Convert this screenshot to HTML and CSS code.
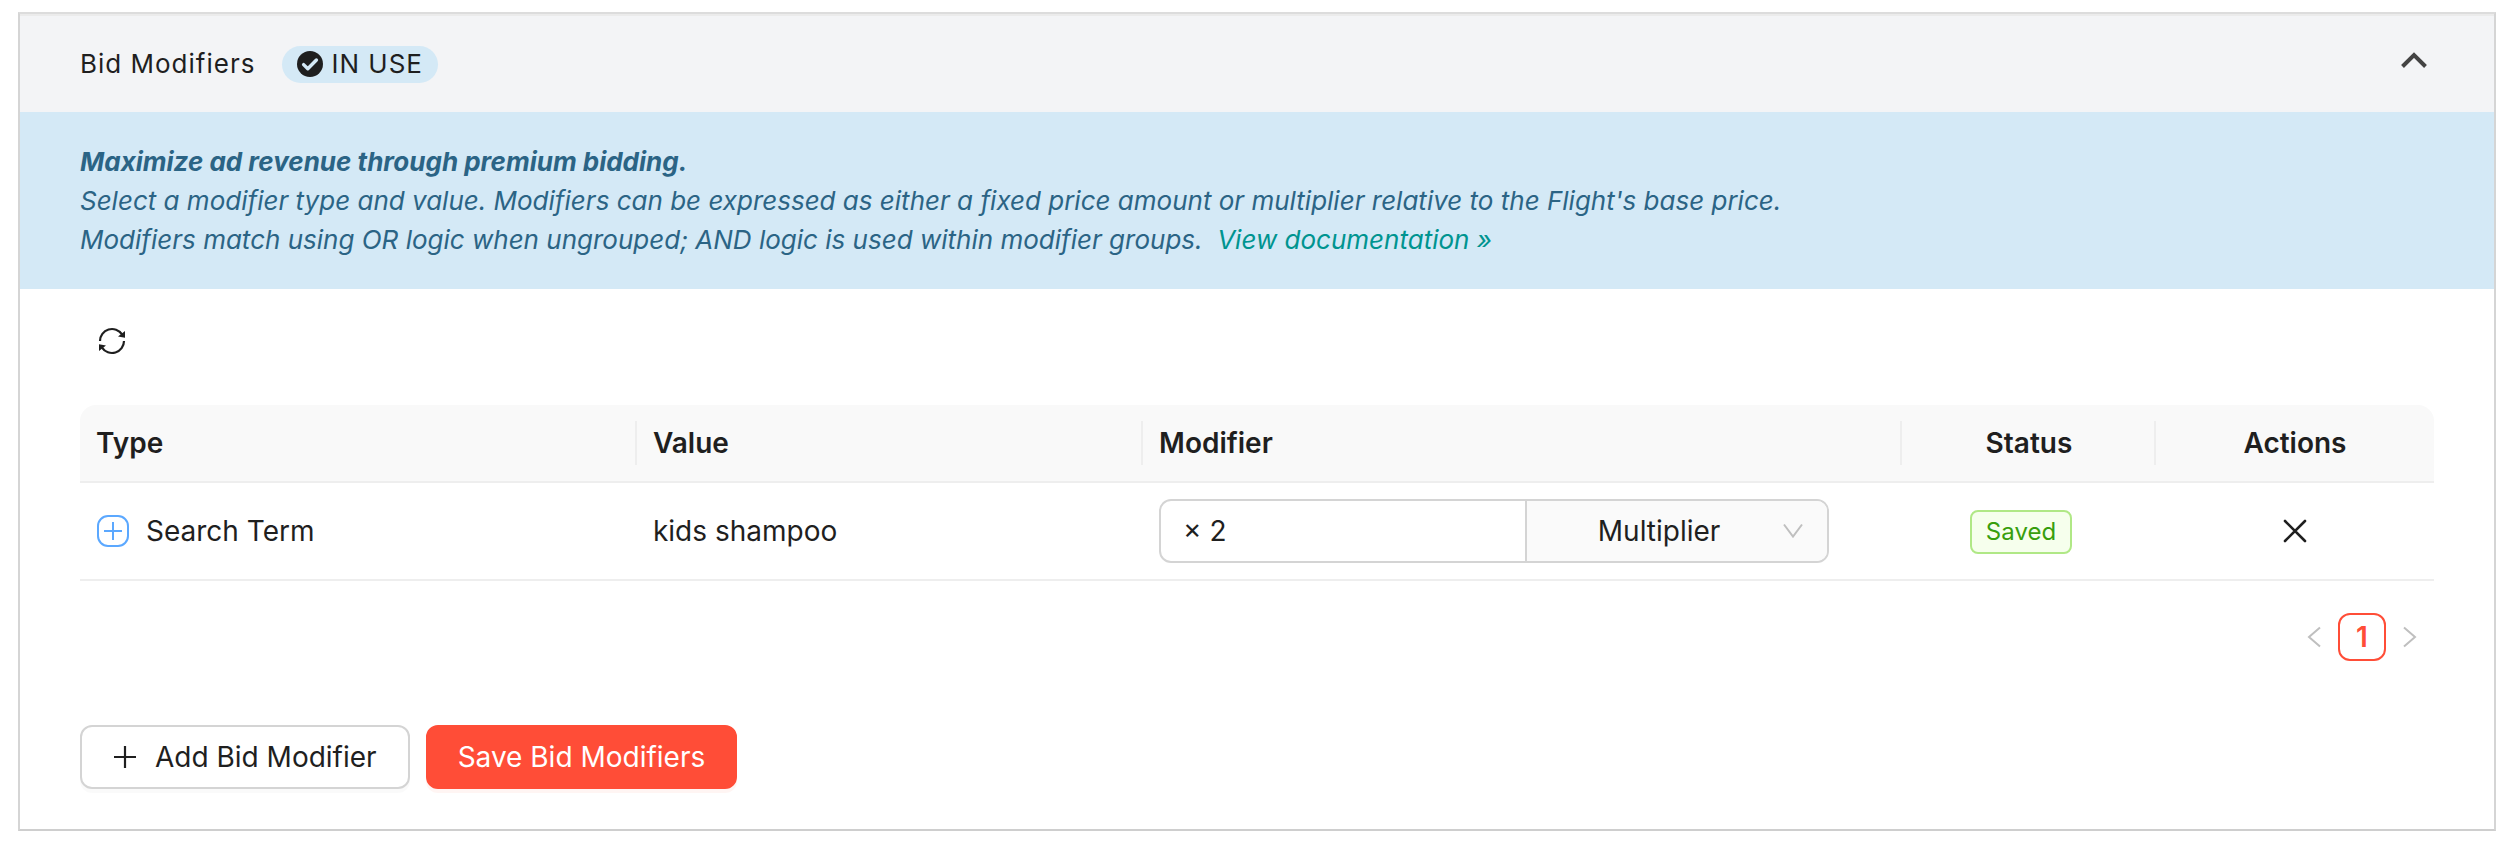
FILE: index.html
```
<!DOCTYPE html>
<html lang="en">
<head>
    <meta charset="UTF-8">
    <meta name="viewport" content="width=device-width, initial-scale=1.0">
    <title>Bid Modifiers</title>
    <link rel="stylesheet" href="styles.css">
</head>
<body>
    <section class="panel">
        <header class="panel-header">
            <h2>Bid Modifiers</h2>
            <span class="badge">
                <svg class="badge-icon" viewBox="0 0 26 26" aria-hidden="true">
                    <circle cx="13" cy="13" r="13" fill="#1f1f1f"/>
                    <path d="M6.6 13.6l4.2 4.2 8.6-8.8" fill="none" stroke="#d4e9f6" stroke-width="3.4" stroke-linecap="round" stroke-linejoin="round"/>
                </svg>
                IN USE
            </span>
            <button class="collapse" type="button" aria-label="Collapse">
                <svg width="28" height="18" viewBox="0 0 28 18">
                    <path d="M2.5 15.5L14 4l11.5 11.5" fill="none" stroke="#434343" stroke-width="4"/>
                </svg>
            </button>
        </header>

        <div class="banner">
            <strong>Maximize ad revenue through premium bidding.</strong><br>
            Select a modifier type and value. Modifiers can be expressed as either a fixed price amount or multiplier relative to the Flight's base price.<br>
            Modifiers match using OR logic when ungrouped; AND logic is used within modifier groups.&nbsp; <a href="#">View documentation »</a>
        </div>

        <div class="panel-body">
            <button class="refresh" type="button" aria-label="Refresh">
                <svg width="28" height="28" viewBox="0 0 28 28">
                    <path d="M2 14A12 12 0 0 1 24 7.4M26 14A12 12 0 0 1 4 20.6" fill="none" stroke="#1f1f1f" stroke-width="2.2"/>
                    <path d="M27 4v6.8l-7-1.4zM1 24v-6.8l7 1.4z" fill="#1f1f1f"/>
                </svg>
            </button>

            <table class="modifiers">
                <colgroup>
                    <col class="col-type">
                    <col class="col-value">
                    <col class="col-modifier">
                    <col class="col-status">
                    <col class="col-actions">
                </colgroup>
                <thead>
                    <tr>
                        <th>Type</th>
                        <th>Value</th>
                        <th>Modifier</th>
                        <th class="center">Status</th>
                        <th class="center">Actions</th>
                    </tr>
                </thead>
                <tbody>
                    <tr>
                        <td>
                            <div class="type">
                                <button class="expand" type="button" aria-label="Add to group">
                                    <svg width="34" height="32" viewBox="-1 0 34 32">
                                        <rect x="1" y="1" width="30" height="30" rx="10" fill="none" stroke="#5ba8ff" stroke-width="2"/>
                                        <path d="M16 7v18M7 16h18" stroke="#5ba8ff" stroke-width="2"/>
                                    </svg>
                                </button>
                                Search Term
                            </div>
                        </td>
                        <td>kids shampoo</td>
                        <td>
                            <div class="amount">
                                <input type="text" value="× 2" aria-label="Modifier amount">
                                <div class="select">
                                    <select aria-label="Modifier kind">
                                        <option>Multiplier</option>
                                        <option>Fixed</option>
                                    </select>
                                    <svg width="20" height="16" viewBox="0 0 20 16" aria-hidden="true">
                                        <path d="M1 1.5l9 12 9-12" fill="none" stroke="#bfbfbf" stroke-width="2"/>
                                    </svg>
                                </div>
                            </div>
                        </td>
                        <td class="center"><span class="tag">Saved</span></td>
                        <td class="center">
                            <button class="remove" type="button" aria-label="Remove">
                                <svg width="24" height="24" viewBox="0 0 24 24">
                                    <path d="M2 2l20 20M22 2L2 22" stroke="#1f1f1f" stroke-width="2.6" stroke-linecap="round"/>
                                </svg>
                            </button>
                        </td>
                    </tr>
                </tbody>
            </table>

            <nav class="pagination" aria-label="Pages">
                <button type="button" aria-label="Previous page" disabled>
                    <svg width="14" height="22" viewBox="0 0 14 22">
                        <path d="M13 1.5L2 11l11 9.5" fill="none" stroke="#bfbfbf" stroke-width="2"/>
                    </svg>
                </button>
                <button class="current" type="button">1</button>
                <button type="button" aria-label="Next page" disabled>
                    <svg width="14" height="22" viewBox="0 0 14 22">
                        <path d="M1 1.5L12 11 1 20.5" fill="none" stroke="#bfbfbf" stroke-width="2"/>
                    </svg>
                </button>
            </nav>

            <div class="footer">
                <button class="btn" type="button">
                    <svg width="24" height="24" viewBox="0 0 24 24" aria-hidden="true">
                        <path d="M12 1v22M1 12h22" stroke="#1f1f1f" stroke-width="2.2"/>
                    </svg>
                    Add Bid Modifier
                </button>
                <button class="btn btn-primary" type="button">Save Bid Modifiers</button>
            </div>
        </div>
    </section>
</body>
</html>
```
FILE: styles.css
```
* {
    box-sizing: border-box;
}
body {
    margin: 12px 12px 12px 18px;
    background: #fff;
    color: #1f1f1f;
    font-family: Inter, sans-serif;
    font-size: 28px;
    line-height: 44px;
}
button,
input,
select {
    margin: 0;
    padding: 0;
    border: 0;
    background: none;
    color: inherit;
    font: inherit;
}
button {
    cursor: pointer;
}
svg {
    display: block;
    flex: none;
}
.panel {
    border: 2px solid #d5d5d5;
    border-top-color: #dcdcdc;
    border-bottom-color: #cecece;
    box-shadow: 0 4px 12px rgba(0, 0, 0, 0.13);
}
.panel-header {
    display: flex;
    align-items: center;
    min-height: 98px;
    padding: 0 64px 0 60px;
    border-top: 2px solid #ebebeb;
    background: #f3f4f6;
    font-size: 26px;
    letter-spacing: 1px;
}
.panel-header h2 {
    margin: 0 27px 0 0;
    font-size: 26px;
    font-weight: 400;
}
.badge {
    display: flex;
    align-items: center;
    gap: 8px;
    height: 37px;
    padding: 0 15px;
    border-radius: 19px;
    background: #d4e9f6;
}
.badge-icon {
    width: 26px;
    height: 26px;
}
.collapse {
    margin-left: auto;
    padding: 4px 2px 12px;
}
.banner {
    padding: 30px 60px;
    background: #d4e9f6;
    color: #2b6485;
    font-size: 26px;
    font-style: oblique 10deg;
    line-height: 39px;
}
.banner strong {
    font-weight: 700;
}
.banner a {
    color: #009490;
    text-decoration: none;
}
.panel-body {
    padding: 20px 60px 40px;
}
.refresh {
    display: flex;
    align-items: center;
    justify-content: center;
    width: 64px;
    height: 64px;
    margin-bottom: 32px;
}
.modifiers {
    width: 100%;
    border-collapse: separate;
    border-spacing: 0;
    table-layout: fixed;
}
.col-type {
    width: 23.66%;
}
.col-value {
    width: 21.5%;
}
.col-modifier {
    width: 32.24%;
}
.col-status {
    width: 10.79%;
}
.col-actions {
    width: 11.81%;
}
.modifiers th,
.modifiers td {
    padding: 16px;
    border-bottom: 2px solid #eee;
    text-align: left;
}
.modifiers th {
    background: #f9f9f9 linear-gradient(#eee, #eee) no-repeat right center / 2px 44px;
    font-weight: 600;
}
.modifiers th:first-child {
    border-top-left-radius: 16px;
}
.modifiers th:last-child {
    border-top-right-radius: 16px;
    background-image: none;
}
.modifiers .center {
    text-align: center;
}
.type {
    display: flex;
    align-items: center;
    gap: 16px;
}
.amount {
    display: flex;
    max-width: 670px;
    height: 64px;
    border: 2px solid #d4d4d4;
    border-radius: 12px;
    overflow: hidden;
}
.amount input {
    flex: 1;
    min-width: 0;
    padding: 0 22px;
}
.select {
    position: relative;
    width: 302px;
    border-left: 2px solid #d4d4d4;
    background: #fafafa;
}
.select select {
    width: 100%;
    height: 100%;
    padding-right: 36px;
    appearance: none;
    text-align: center;
    text-align-last: center;
}
.select svg {
    position: absolute;
    top: 22px;
    right: 24px;
    pointer-events: none;
}
.tag {
    display: inline-block;
    margin-right: 16px;
    padding: 0 14px;
    border: 2px solid #b0e886;
    border-radius: 8px;
    background: #f6ffed;
    color: #389e0d;
    font-size: 24px;
    line-height: 40px;
    vertical-align: middle;
}
.remove {
    display: block;
    margin: 0 auto;
}
.pagination {
    display: flex;
    justify-content: flex-end;
    margin: 32px 0 64px;
}
.pagination button {
    display: flex;
    align-items: center;
    justify-content: center;
    width: 48px;
    height: 48px;
}
.pagination .current {
    border: 2px solid #ff4d37;
    border-radius: 12px;
    color: #ff4d37;
    font-weight: 600;
}
.footer {
    display: flex;
    gap: 16px;
}
.btn {
    display: flex;
    align-items: center;
    gap: 18px;
    height: 64px;
    padding: 0 31px;
    border: 2px solid #d4d4d4;
    border-radius: 12px;
    background: #fff;
    box-shadow: 0 4px 0 rgba(0, 0, 0, 0.02);
}
.btn-primary {
    padding: 0 30px;
    border-color: #ff4d37;
    background: #ff4d37;
    box-shadow: 0 4px 0 rgba(255, 77, 55, 0.06);
    color: #fff;
}
```
